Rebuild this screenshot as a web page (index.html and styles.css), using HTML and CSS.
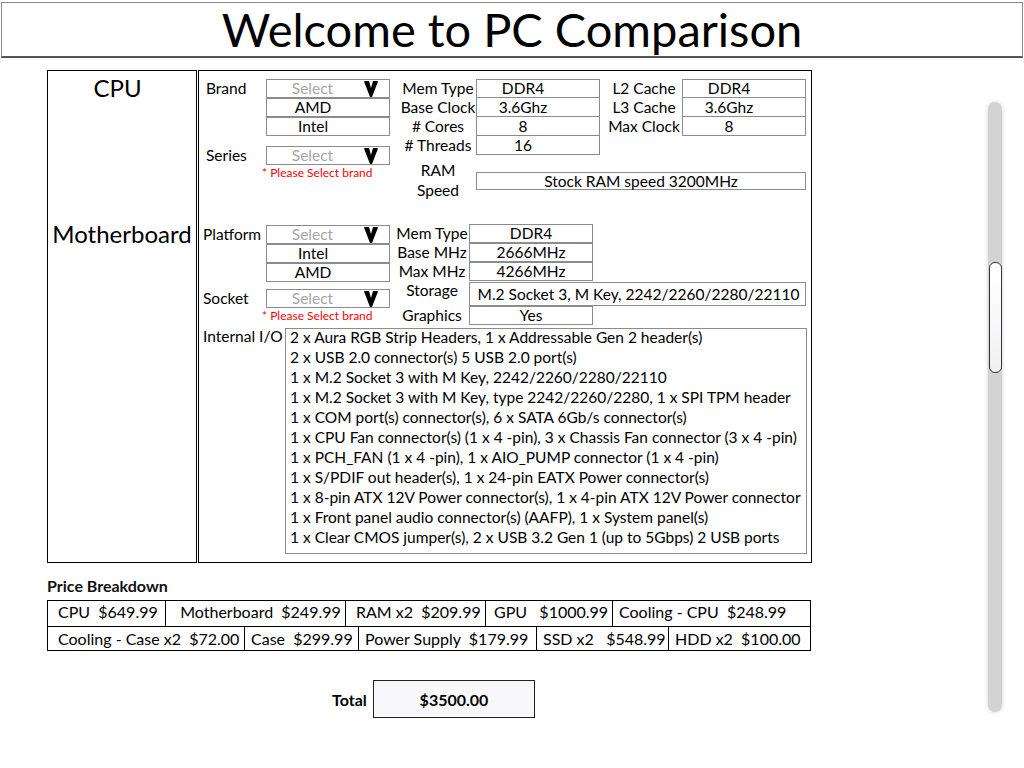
FILE: index.html
```html
<!DOCTYPE html>
<html>
<head>
<meta charset="utf-8">
<title>PC Comparison</title>
<link rel="stylesheet" href="styles.css">
</head>
<body>
<header class="header">Welcome to PC Comparison</header>

<div class="main">
  <div class="side">
    <div class="side-title cpu">CPU</div>
    <div class="side-title mb">Motherboard</div>
  </div>

  <div class="panel">
    <section class="cpu-sec">
      <div class="col-a">
        <div class="frow">
          <div class="lbl lbl-a">Brand</div>
          <div class="stack">
            <div class="sel"><span class="sel-text">Select</span><svg class="chev" viewBox="0 0 14 16"><polygon points="0,0.5 1,0 5,0 7,7 9,0 13,0 14,0.5 8,16 6,16"/></svg></div>
            <div class="opt">AMD</div>
            <div class="opt">Intel</div>
          </div>
        </div>
        <div class="frow gap-series">
          <div class="lbl lbl-a">Series</div>
          <div class="stack">
            <div class="sel"><span class="sel-text">Select</span><svg class="chev" viewBox="0 0 14 16"><polygon points="0,0.5 1,0 5,0 7,7 9,0 13,0 14,0.5 8,16 6,16"/></svg></div>
          </div>
        </div>
        <div class="note note-cpu">* Please Select brand</div>
      </div>

      <div class="cpu-grid">
        <div class="glbl">Mem Type</div>
        <div class="fld fld-off">DDR4</div>
        <div class="glbl glbl-c">L2 Cache</div>
        <div class="fld fld-off">DDR4</div>

        <div class="glbl">Base Clock</div>
        <div class="fld fld-off nt">3.6Ghz</div>
        <div class="glbl glbl-c">L3 Cache</div>
        <div class="fld fld-off nt">3.6Ghz</div>

        <div class="glbl"># Cores</div>
        <div class="fld fld-off nt">8</div>
        <div class="glbl glbl-c">Max Clock</div>
        <div class="fld fld-off nt">8</div>

        <div class="glbl"># Threads</div>
        <div class="fld fld-off nt">16</div>
        <div class="empty"></div>
        <div class="empty"></div>

        <div class="glbl ram-lbl">RAM<br>Speed</div>
        <div class="fld ram-fld">Stock RAM speed 3200MHz</div>
      </div>
    </section>

    <section class="mb-sec">
      <div class="mb-top">
        <div class="col-a mb-col-a">
          <div class="frow">
            <div class="lbl lbl-b">Platform</div>
            <div class="stack">
              <div class="sel"><span class="sel-text">Select</span><svg class="chev" viewBox="0 0 14 16"><polygon points="0,0.5 1,0 5,0 7,7 9,0 13,0 14,0.5 8,16 6,16"/></svg></div>
              <div class="opt">Intel</div>
              <div class="opt">AMD</div>
            </div>
          </div>
          <div class="frow gap-socket">
            <div class="lbl lbl-b">Socket</div>
            <div class="stack">
              <div class="sel"><span class="sel-text">Select</span><svg class="chev" viewBox="0 0 14 16"><polygon points="0,0.5 1,0 5,0 7,7 9,0 13,0 14,0.5 8,16 6,16"/></svg></div>
            </div>
          </div>
          <div class="note note-mb">* Please Select brand</div>
        </div>

        <div class="mb-grid">
          <div class="glbl">Mem Type</div>
          <div class="fld">DDR4</div>
          <div class="empty"></div>

          <div class="glbl">Base MHz</div>
          <div class="fld">2666MHz</div>
          <div class="empty"></div>

          <div class="glbl">Max MHz</div>
          <div class="fld">4266MHz</div>
          <div class="empty"></div>

          <div class="glbl storage-lbl">Storage</div>
          <div class="fld storage-fld">M.2 Socket 3, M Key, 2242/2260/2280/22110</div>

          <div class="glbl">Graphics</div>
          <div class="fld">Yes</div>
          <div class="empty"></div>
        </div>
      </div>

      <div class="io-row">
        <div class="lbl io-lbl">Internal I/O</div>
        <div class="io-box">
          <div class="io-lines">
            <div>2 x Aura RGB Strip Headers, 1 x Addressable Gen 2 header(s)</div>
            <div>2 x USB 2.0 connector(s) 5 USB 2.0 port(s)</div>
            <div>1 x M.2 Socket 3 with M Key, 2242/2260/2280/22110</div>
            <div>1 x M.2 Socket 3 with M Key, type 2242/2260/2280, 1 x SPI TPM header</div>
            <div>1 x COM port(s) connector(s), 6 x SATA 6Gb/s connector(s)</div>
            <div>1 x CPU Fan connector(s) (1 x 4 -pin), 3 x Chassis Fan connector (3 x 4 -pin)</div>
            <div>1 x PCH_FAN (1 x 4 -pin), 1 x AIO_PUMP connector (1 x 4 -pin)</div>
            <div>1 x S/PDIF out header(s), 1 x 24-pin EATX Power connector(s)</div>
            <div>1 x 8-pin ATX 12V Power connector(s), 1 x 4-pin ATX 12V Power connector</div>
            <div>1 x Front panel audio connector(s) (AAFP), 1 x System panel(s)</div>
            <div>1 x Clear CMOS jumper(s), 2 x USB 3.2 Gen 1 (up to 5Gbps) 2 USB ports</div>
          </div>
        </div>
      </div>
    </section>
  </div>
</div>

<div class="price-title">Price Breakdown</div>
<div class="price-table">
  <div class="prow prow-1">
    <div class="pcell w1">CPU  $649.99</div>
    <div class="pcell w2">  Motherboard  $249.99</div>
    <div class="pcell w3">RAM x2  $209.99</div>
    <div class="pcell w4">GPU   $1000.99</div>
    <div class="pcell w5">Cooling - CPU  $248.99</div>
  </div>
  <div class="prow prow-2">
    <div class="pcell v1">Cooling - Case x2  $72.00</div>
    <div class="pcell v2">Case  $299.99</div>
    <div class="pcell v3">Power Supply  $179.99</div>
    <div class="pcell v4">SSD x2   $548.99</div>
    <div class="pcell v5">HDD x2  $100.00</div>
  </div>
</div>

<div class="total-row">
  <div class="total-lbl">Total</div>
  <div class="total-box">$3500.00</div>
</div>

<div class="scrollbar"><div class="thumb"></div></div>
</body>
</html>
```

FILE: styles.css
```css
* { box-sizing: border-box; }

body {
  margin: 0;
  width: 1024px;
  height: 768px;
  overflow: hidden;
  position: relative;
  background: #fff;
  color: #111;
  font-family: "Lato", "Open Sans", sans-serif;
  font-size: 15.5px;
}

.header {
  margin: 2px 0 0 1px;
  width: 1022px;
  height: 56px;
  border: 1px solid #8a8a8a;
  border-bottom: 2px solid #555;
  text-align: center;
  font-size: 47px;
  line-height: 52px;
  color: #000;
}

.main {
  display: flex;
  gap: 1px;
  margin: 12px 0 0 47px;
}

.side {
  width: 150px;
  height: 493px;
  border: 1px solid #000;
  display: flex;
  flex-direction: column;
  align-items: center;
  font-size: 24px;
  color: #000;
}
.side-title { line-height: 28px; }
.side-title.cpu { margin-top: 3px; padding-right: 9px; }
.side-title.mb { margin-top: 118px; }

.panel {
  width: 614px;
  height: 493px;
  border: 1px solid #000;
  padding-top: 8px;
}

/* CPU section */
.cpu-sec {
  display: flex;
  padding-left: 7px;
  height: 145px;
}
.col-a { width: 194px; }
.frow { display: flex; }
.lbl { line-height: 19px; color: #000; }
.lbl-a { width: 60px; }
.lbl-b { width: 63px; }
.gap-series { margin-top: 10px; }
.gap-socket { margin-top: 7px; }

.stack { width: 124px; }
.sel, .opt {
  height: 19px;
  border: 1px solid #8c8c8c;
  display: flex;
  align-items: center;
  line-height: 17px;
}
.sel-text {
  flex: 1;
  text-align: center;
  color: #a6a6a6;
  padding-right: 6px;
}
.chev {
  width: 14px;
  height: 16px;
  margin-right: 11px;
  fill: #000;
}
.opt {
  justify-content: center;
  padding-right: 30px;
  color: #000;
}

.note {
  color: #f00;
  font-size: 12px;
  line-height: 14px;
  margin-top: 1px;
}
.note-cpu { margin-left: 56px; }
.note-mb { margin-left: 59px; }

.cpu-grid {
  display: grid;
  grid-template-columns: 76px 124px 82px 124px;
  grid-template-rows: repeat(4, 19px) 40px;
}
.glbl {
  text-align: center;
  line-height: 19px;
  white-space: nowrap;
  color: #000;
}
.glbl-c { padding-left: 6px; }
.fld {
  border: 1px solid #8c8c8c;
  text-align: center;
  line-height: 17px;
  color: #000;
  white-space: nowrap;
}
.fld.nt { border-top: 0; line-height: 18px; }
.fld-off { padding-right: 30px; }
.ram-lbl {
  line-height: 20px;
  margin-top: 5px;
}
.ram-fld {
  grid-column: 2 / 5;
  height: 18px;
  align-self: center;
  margin-top: 11px;
  line-height: 16px;
}

/* Motherboard section */
.mb-sec {
  padding-left: 4px;
}
.mb-top { display: flex; }
.mb-col-a { width: 192px; padding-top: 1px; }
.mb-grid {
  display: grid;
  grid-template-columns: 74px 124px 213px;
  grid-template-rows: 19px 19px 19px 25px 19px;
}
.storage-lbl { line-height: 19px; }
.storage-fld {
  grid-column: 2 / 4;
  margin-top: 1px;
  line-height: 22px;
  padding-left: 2px;
}

.io-row {
  display: flex;
  margin-top: 3px;
}
.io-lbl {
  width: 82px;
  line-height: 17px;
  white-space: nowrap;
}
.io-box {
  width: 522px;
  height: 226px;
  border: 1px solid #8c8c8c;
  padding-left: 4px;
  line-height: 20px;
  color: #000;
}
.io-lines { margin-top: -2px; white-space: nowrap; }

/* Price breakdown */
.price-title {
  margin: 13px 0 0 47px;
  line-height: 20px;
  font-size: 16px;
  font-weight: 700;
  color: #111;
}
.price-table {
  margin: 4px 0 0 47px;
  width: 764px;
}
.prow { display: flex; }
.prow-1 { height: 27px; }
.prow-2 { height: 25px; margin-top: -1px; }
.pcell {
  border: 1px solid #000;
  margin-left: -1px;
  display: flex;
  align-items: center;
  padding-left: 6px;
  padding-bottom: 1px;
  white-space: pre;
  font-size: 16px;
  color: #000;
}
.prow-1 .pcell { padding-bottom: 4px; }
.prow-2 .pcell { padding-bottom: 0; }
.pcell:first-child { margin-left: 0; padding-left: 10px; }
.w1 { width: 119px; }
.w2 { width: 181px; }
.w3 { width: 141px; padding-left: 10px; }
.w4 { width: 128px; padding-left: 8px; }
.w5 { width: 199px; }
.v1 { width: 198px; }
.v2 { width: 115px; }
.v3 { width: 179px; }
.v4 { width: 133px; }
.v5 { width: 143px; }

/* Total */
.total-row {
  display: flex;
  align-items: center;
  margin: 29px 0 0 332px;
}
.total-lbl {
  font-weight: 700;
  width: 41px;
  font-size: 16px;
  color: #000;
}
.total-box {
  width: 162px;
  height: 38px;
  border: 1px solid #222;
  background: #f8f8fb;
  display: flex;
  align-items: center;
  justify-content: center;
  font-weight: 700;
  font-size: 16px;
  color: #000;
}

/* Decorative scrollbar overlay */
.scrollbar {
  position: absolute;
  left: 988px;
  top: 102px;
  width: 14px;
  height: 610px;
  border-radius: 7px;
  background: #d3d3d3;
  box-shadow: 0 0 4px rgba(0, 0, 0, 0.18);
}
.thumb {
  position: absolute;
  left: 1px;
  top: 160px;
  width: 13px;
  height: 111px;
  border: 1px solid #333;
  border-radius: 6px;
  background: linear-gradient(to bottom, #ffffff, #f1f1f4);
}
```
